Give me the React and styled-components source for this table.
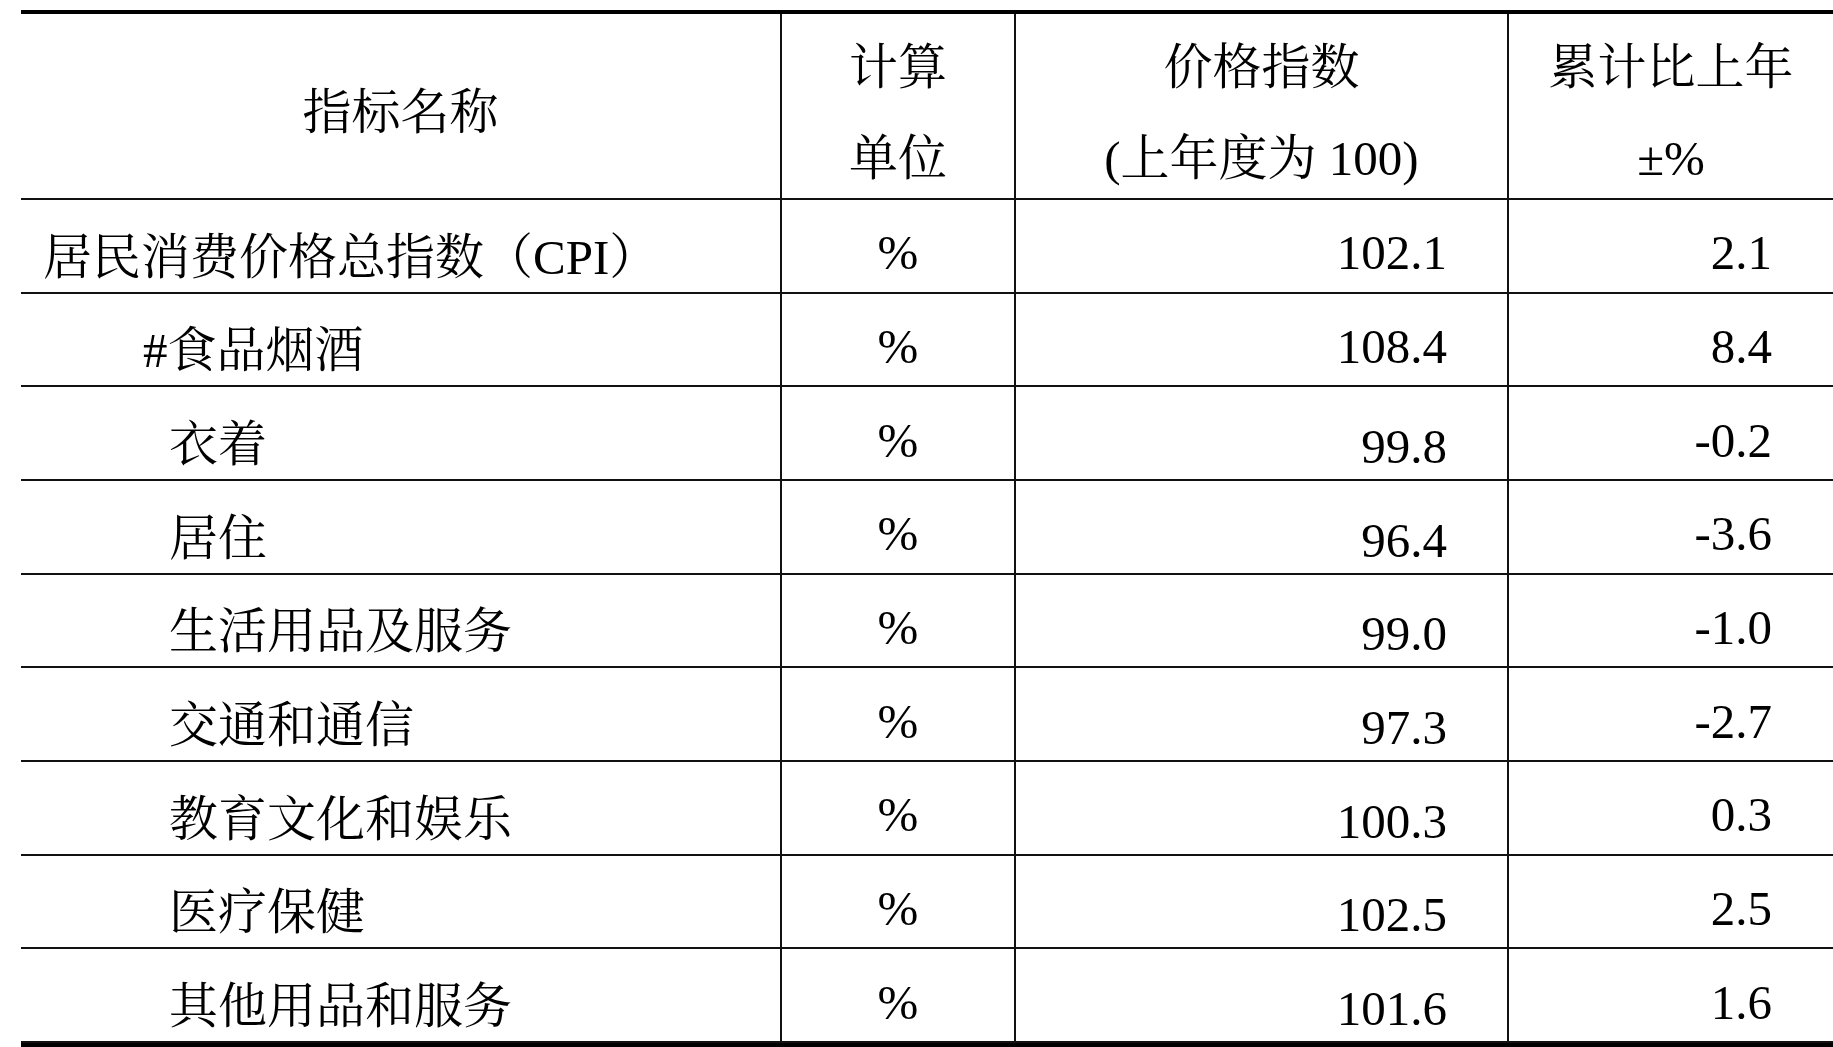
import React from "react";
import styled, { createGlobalStyle } from "styled-components";

const GlobalStyle = createGlobalStyle`
  html, body {
    margin: 0;
    padding: 0;
    background: #fff;
    overflow: hidden;
  }
  body {
    font-family: "Liberation Serif", "Noto Serif CJK SC", "Noto Sans CJK SC", serif;
    color: #000;
  }
  * {
    box-sizing: border-box;
  }
`;

const Sheet = styled.div`
  padding: 10px 0 0 21px;
`;

const Grid = styled.div`
  display: grid;
  grid-template-columns: 761px 234px 493px 1fr;
  grid-template-rows: 186px;
  grid-auto-rows: calc(843px / 9);
  width: 1812px;
  border-top: 4px solid #000;
  border-bottom: 5px solid #000;
  font-size: 49px;
`;

const Row = styled.div`
  display: contents;

  & > div:last-child {
    border-right: none;
  }
`;

const HeadCell = styled.div`
  display: flex;
  flex-direction: column;
  align-items: center;
  justify-content: center;
  padding-top: 13px;
  line-height: 91px;
  text-align: center;
  white-space: nowrap;
  border-bottom: 2px solid #111;
  border-right: 2px solid #111;
`;

const NameCell = styled.div`
  display: flex;
  align-items: center;
  padding-left: ${(p) => [22, 122, 148][p.$level]}px;
  padding-top: 14px;
  white-space: nowrap;
  border-bottom: 2px solid #111;
  border-right: 2px solid #111;
`;

const UnitCell = styled.div`
  display: flex;
  align-items: center;
  justify-content: center;
  padding-top: 14px;
  border-bottom: 2px solid #111;
  border-right: 2px solid #111;
`;

const ValueCell = styled.div`
  display: flex;
  align-items: center;
  justify-content: flex-end;
  padding-right: ${(p) => p.$right}px;
  padding-top: ${(p) => (p.$low ? 27 : 14)}px;
  border-bottom: 2px solid #111;
  border-right: 2px solid #111;
`;

const rows = [
  { name: "居民消费价格总指数（CPI）", level: 0, index: "102.1", change: "2.1" },
  { name: "#食品烟酒", level: 1, index: "108.4", change: "8.4" },
  { name: "衣着", level: 2, index: "99.8", change: "-0.2", low: true },
  { name: "居住", level: 2, index: "96.4", change: "-3.6", low: true },
  { name: "生活用品及服务", level: 2, index: "99.0", change: "-1.0", low: true },
  { name: "交通和通信", level: 2, index: "97.3", change: "-2.7", low: true },
  { name: "教育文化和娱乐", level: 2, index: "100.3", change: "0.3", low: true },
  { name: "医疗保健", level: 2, index: "102.5", change: "2.5", low: true },
  { name: "其他用品和服务", level: 2, index: "101.6", change: "1.6", low: true },
];

const App = () => {
  return (
    <Sheet>
      <GlobalStyle />
      <Grid>
        <Row>
          <HeadCell>指标名称</HeadCell>
          <HeadCell>
            <span>计算</span>
            <span>单位</span>
          </HeadCell>
          <HeadCell>
            <span>价格指数</span>
            <span>(上年度为 100)</span>
          </HeadCell>
          <HeadCell>
            <span>累计比上年</span>
            <span>±%</span>
          </HeadCell>
        </Row>
        {rows.map((row) => (
          <Row key={row.name}>
            <NameCell $level={row.level}>{row.name}</NameCell>
            <UnitCell>%</UnitCell>
            <ValueCell $right={60} $low={row.low}>
              {row.index}
            </ValueCell>
            <ValueCell $right={61}>{row.change}</ValueCell>
          </Row>
        ))}
      </Grid>
    </Sheet>
  );
};

export default App;
